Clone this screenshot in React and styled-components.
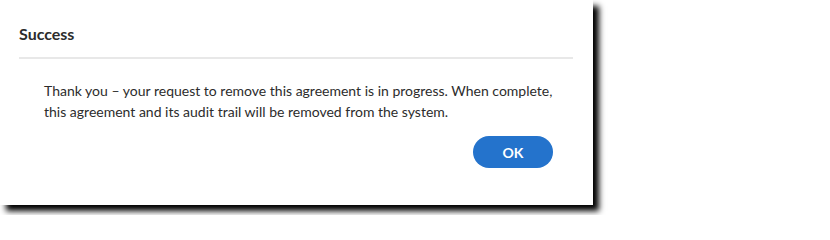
import React from 'react'
import styled, { createGlobalStyle } from 'styled-components'

const GlobalStyle = createGlobalStyle`
body {
    margin: 0;
    background: #ffffff;
    font-family: Lato, "Liberation Sans", sans-serif;
}
`

const Page = styled.div`
width: 830px;
height: 215px;
background: #ffffff;
`

const Dialog = styled.div`
width: 593px;
height: 205px;
box-sizing: border-box;
background: #ffffff;
box-shadow: 6px 6px 6px #000000;
display: flex;
flex-direction: column;
`

const Header = styled.div`
padding: 24px 20px 0 19px;
`

const Title = styled.h2`
margin: 0;
font-size: 16px;
line-height: 20px;
font-weight: 700;
color: #2c2c2c;
`

const Divider = styled.div`
margin-top: 13px;
height: 2px;
background: #e8e8e8;
`

const Body = styled.p`
margin: 0;
padding: 21px 30px 0 44px;
font-size: 14px;
line-height: 21px;
color: #2c2c2c;
`

const Footer = styled.div`
display: flex;
justify-content: flex-end;
padding: 14px 40px 0 0;
`

const Button = styled.button`
width: 80px;
height: 32px;
border: none;
border-radius: 16px;
background: #2473cc;
color: #ffffff;
font-family: Lato, "Liberation Sans", sans-serif;
font-size: 14px;
font-weight: 700;
cursor: pointer;
`

const App = () => {
    return (
        <Page>
            <GlobalStyle />
            <Dialog>
                <Header>
                    <Title>Success</Title>
                    <Divider />
                </Header>
                <Body>
                    Thank you – your request to remove this agreement is in progress. When complete,
                    this agreement and its audit trail will be removed from the system.
                </Body>
                <Footer>
                    <Button>OK</Button>
                </Footer>
            </Dialog>
        </Page>
    )
}

export default App
